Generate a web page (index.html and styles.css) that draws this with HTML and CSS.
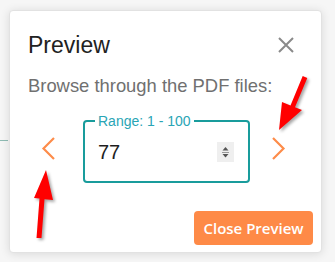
FILE: index.html
```html
<!DOCTYPE html>
<html lang="en">
<head>
    <meta charset="UTF-8">
    <meta name="viewport" content="width=device-width, initial-scale=1.0">
    <title>Preview</title>
    <link rel="stylesheet" href="styles.css">
</head>
<body>
    <div class="page-line"></div>

    <div class="modal">
        <div class="modal-header">
            <h1 class="modal-title">Preview</h1>
            <button class="close-x" aria-label="Close">
                <svg width="16" height="16" viewBox="0 0 16 16">
                    <path d="M1 1 L15 15 M15 1 L1 15" stroke="#8a8a8a" stroke-width="2" fill="none"/>
                </svg>
            </button>
        </div>

        <p class="hint">Browse through the PDF files:</p>

        <div class="pager">
            <button class="chevron prev" aria-label="Previous">
                <svg width="15" height="23" viewBox="0 0 15 23">
                    <path d="M13 1 L2.5 11.5 L13 22" stroke="#fd8c4a" stroke-width="2.2" fill="none"/>
                </svg>
            </button>

            <fieldset class="range">
                <legend>Range: 1 - 100</legend>
                <div class="range-row">
                    <span class="range-value">77</span>
                    <span class="spinner">
                        <svg width="17" height="20" viewBox="0 0 17 20">
                            <path d="M5.5 8.5 L8.5 5 L11.5 8.5 Z" fill="#555"/>
                            <path d="M5 10.5 H12" stroke="#999" stroke-width="1"/>
                            <path d="M5.5 12 L11.5 12 L8.5 15.5 Z" fill="#555"/>
                        </svg>
                    </span>
                </div>
            </fieldset>

            <button class="chevron next" aria-label="Next">
                <svg width="15" height="23" viewBox="0 0 15 23">
                    <path d="M2 1 L12.5 11.5 L2 22" stroke="#fd8c4a" stroke-width="2.2" fill="none"/>
                </svg>
            </button>
        </div>

        <div class="modal-footer">
            <button class="close-btn">Close Preview</button>
        </div>
    </div>

    <!-- annotation arrows drawn over the screenshot -->
    <svg class="arrows" width="335" height="262" viewBox="0 0 335 262">
        <polygon points="46,170 53,200 44.5,199.2 41.5,238 36.5,238 39.5,198.6 34,198" fill="#ff0000"/>
        <polygon points="279,130 282,102 290.5,105.4 302.7,76 307.3,78 295,107.2 302,110" fill="#ff0000"/>
    </svg>
</body>
</html>
```

FILE: styles.css
```css
body {
    margin: 0;
    background: #f6f6f6;
    font-family: "Liberation Sans", Arial, sans-serif;
    width: 335px;
    height: 262px;
    overflow: hidden;
    position: relative;
}
.page-line {
    position: absolute;
    left: 0;
    top: 140px;
    width: 8px;
    height: 1px;
    background: #8fbcb4;
}
.modal {
    position: relative;
    margin: 10px 0 0 9px;
    width: 313px;
    box-sizing: border-box;
    background: #fff;
    border: 1px solid #e2e2e2;
    border-radius: 4px;
    box-shadow: 0 1px 10px rgba(0, 0, 0, 0.12);
}
.modal-header {
    display: flex;
    align-items: center;
    justify-content: space-between;
    padding: 20px 27px 0 18px;
}
.modal-title {
    margin: 0;
    font-size: 23px;
    line-height: 28px;
    font-weight: normal;
    color: #222;
}
.close-x {
    border: none;
    background: none;
    padding: 0;
    width: 16px;
    height: 16px;
    display: flex;
}
.hint {
    margin: 16px 0 0 18px;
    font-size: 18.4px;
    line-height: 22px;
    color: #707070;
}
.pager {
    display: flex;
    align-items: center;
    margin: 16px 0 0 31px;
}
.chevron {
    border: none;
    background: none;
    padding: 0;
    display: flex;
}
.prev {
    margin-right: 27px;
}
.next {
    margin-left: 21px;
}
.range {
    margin: 0;
    width: 167px;
    min-width: 0;
    box-sizing: border-box;
    border: 2px solid #199c9c;
    border-radius: 4px;
    padding: 0 14px 6px 13px;
}
.range legend {
    margin-left: -3px;
    padding: 0 3px;
    font-size: 14px;
    line-height: 16px;
    color: #2aa5b5;
}
.range-row {
    display: flex;
    align-items: center;
    justify-content: space-between;
    height: 46px;
}
.range-value {
    font-size: 20px;
    line-height: 22px;
    color: #1e1e1e;
}
.spinner {
    display: flex;
    width: 17px;
    height: 20px;
    background: #efefef;
}
.modal-footer {
    display: flex;
    justify-content: flex-end;
    padding: 28px 8px 7px 0;
}
.close-btn {
    width: 119px;
    height: 34px;
    border: none;
    border-radius: 4px;
    background: #fe8a47;
    color: #fff;
    font-family: "Open Sans", sans-serif;
    font-weight: 600;
    font-size: 15px;
    padding: 0;
}
.arrows {
    position: absolute;
    left: 0;
    top: 0;
    pointer-events: none;
    filter: drop-shadow(2px 2px 1.5px rgba(0, 0, 0, 0.35));
}
```
